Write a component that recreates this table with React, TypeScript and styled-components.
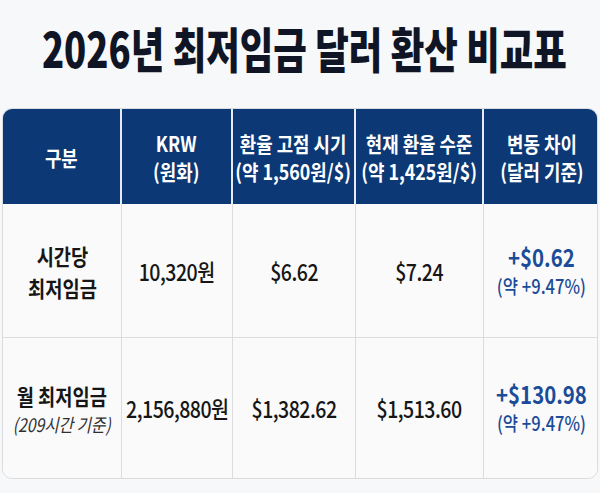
import React from "react";
import styled, { createGlobalStyle } from "styled-components";

const Global = createGlobalStyle`
  html, body { margin: 0; padding: 0; background: #f7f8f9; }
  body { font-family: "Noto Sans CJK KR", "Noto Sans", sans-serif; color: #141414; }
`;

const Page = styled.div`
  width: 600px;
  height: 493px;
  box-sizing: border-box;
  padding: 0 2px;
  display: flex;
  flex-direction: column;
  align-items: stretch;
  overflow: hidden;
`;

const Title = styled.h1`
  margin: 0;
  height: 108px;
  display: flex;
  align-items: center;
  justify-content: center;
  padding: 0 0 14px 8px;
  box-sizing: border-box;
  font-size: 48px;
  font-weight: 900;
  line-height: 1;
  color: #0f1525;
`;

const Squish = styled.span<{ $sx: number }>`
  display: inline-block;
  flex-shrink: 0;
  white-space: nowrap;
  transform: scaleX(${(p) => p.$sx});
`;

const Table = styled.div`
  display: grid;
  grid-template-columns: 119px 111px 123px 128px 115px;
  grid-template-rows: 95px 134px 140px;
  border: 1px solid #d9dbde;
  border-radius: 10px;
  overflow: hidden;
  background: #fafafa;
  width: 596px;
  box-sizing: border-box;
`;

const Head = styled.div<{ $last?: boolean }>`
  background: #0c3875;
  color: #ffffff;
  display: flex;
  align-items: center;
  justify-content: center;
  border-right: ${(p) => (p.$last ? "none" : "2px solid #e8ecf2")};
`;

const Stack = styled.div`
  display: flex;
  flex-direction: column;
  align-items: center;
  text-align: center;
  white-space: nowrap;
  transform: scaleX(0.85);
`;

const HeadLine = styled.span`
  font-size: 21px;
  font-weight: 600;
  line-height: 28px;
`;

const Cell = styled.div<{ $last?: boolean; $bottom?: boolean }>`
  display: flex;
  align-items: center;
  justify-content: center;
  border-right: ${(p) => (p.$last ? "none" : "1.5px solid #dcdcdc")};
  border-bottom: ${(p) => (p.$bottom ? "none" : "1.5px solid #dcdcdc")};
  background: #fafafa;
`;

const Label = styled.div`
  font-size: 22px;
  font-weight: 600;
  line-height: 32px;
  color: #161616;
`;

const Note = styled.div`
  font-size: 18.5px;
  font-style: italic;
  font-weight: 400;
  line-height: 27px;
  color: #303030;
`;

const Value = styled.div`
  font-size: 23px;
  font-weight: 500;
  color: #161616;
  letter-spacing: -0.6px;
`;

const Diff = styled.div`
  font-size: 24px;
  font-weight: 700;
  line-height: 30px;
  color: #1a4c98;
`;

const Pct = styled.div`
  font-size: 19.5px;
  font-weight: 500;
  line-height: 28px;
  color: #1a4c98;
`;

const headers: [string, string?][] = [
  ["구분"],
  ["KRW", "(원화)"],
  ["환율 고점 시기", "(약 1,560원/$)"],
  ["현재 환율 수준", "(약 1,425원/$)"],
  ["변동 차이", "(달러 기준)"],
];

const rows = [
  {
    label: ["시간당", "최저임금"],
    note: null as string | null,
    values: ["10,320원", "$6.62", "$7.24"],
    diff: "+$0.62",
    pct: "(약 +9.47%)",
  },
  {
    label: ["월 최저임금"],
    note: "(209시간 기준)",
    values: ["2,156,880원", "$1,382.62", "$1,513.60"],
    diff: "+$130.98",
    pct: "(약 +9.47%)",
  },
];

export default function App() {
  return (
    <>
      <Global />
      <Page>
        <Title>
          <Squish $sx={0.76}>2026년 최저임금 달러 환산 비교표</Squish>
        </Title>
        <Table>
          {headers.map(([a, b], i) => (
            <Head key={i} $last={i === headers.length - 1}>
              <Stack>
                <HeadLine>{a}</HeadLine>
                {b && <HeadLine>{b}</HeadLine>}
              </Stack>
            </Head>
          ))}
          {rows.map((r, ri) => {
            const bottom = ri === rows.length - 1;
            return (
              <React.Fragment key={ri}>
                <Cell $bottom={bottom}>
                  <Stack>
                    {r.label.map((l) => (
                      <Label key={l}>{l}</Label>
                    ))}
                    {r.note && <Note>{r.note}</Note>}
                  </Stack>
                </Cell>
                {r.values.map((v) => (
                  <Cell key={v} $bottom={bottom}>
                    <Stack>
                      <Value>{v}</Value>
                    </Stack>
                  </Cell>
                ))}
                <Cell $bottom={bottom} $last>
                  <Stack>
                    <Diff>{r.diff}</Diff>
                    <Pct>{r.pct}</Pct>
                  </Stack>
                </Cell>
              </React.Fragment>
            );
          })}
        </Table>
      </Page>
    </>
  );
}
